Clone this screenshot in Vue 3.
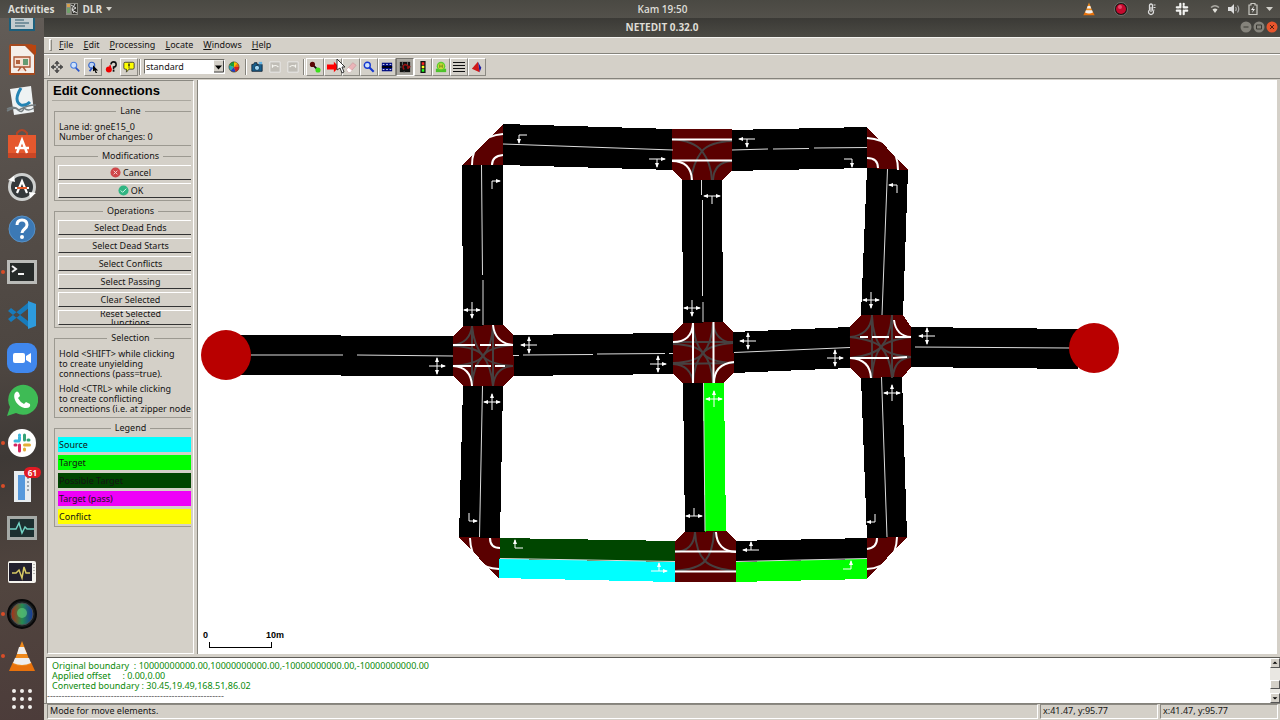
<script setup>
import { ref } from 'vue'

const scheme = ref('standard')

const menus = ['File', 'Edit', 'Processing', 'Locate', 'Windows', 'Help']

const operations = [
  'Select Dead Ends',
  'Select Dead Starts',
  'Select Conflicts',
  'Select Passing',
  'Clear Selected',
  'Reset Selected Junctions'
]

const legend = [
  { text: 'Source', cls: 'source' },
  { text: 'Target', cls: 'target' },
  { text: 'Possible Target', cls: 'possible' },
  { text: 'Target (pass)', cls: 'pass' },
  { text: 'Conflict', cls: 'conflict' }
]

const log = [
  'Original boundary  : 10000000000.00,10000000000.00,-10000000000.00,-10000000000.00',
  'Applied offset     : 0.00,0.00',
  'Converted boundary : 30.45,19.49,168.51,86.02',
  '-------------------------------------------------------------'
]

const BLACK = '#000'
const lanes = [
  { p: '503,124 673,129 673,170 503,165', c: BLACK },
  { p: '731,130 867,127 867,168 731,171', c: BLACK },
  { p: '462,165 503,165 503,325 463,326', c: BLACK },
  { p: '682,180 722,180 723,323 683,323', c: BLACK },
  { p: '867,168 908,170 903,316 861,315', c: BLACK },
  { p: '226,335 453,336 453,376 226,375', c: BLACK },
  { p: '513,335 673,333 673,374 513,376', c: BLACK },
  { p: '733,332 850,327 850,368 733,373', c: BLACK },
  { p: '911,327 1078,329 1078,369 911,367', c: BLACK },
  { p: '463,386 503,386 500,538 459,537', c: BLACK },
  { p: '683,383 703,383 705,532 685,532', c: BLACK },
  { p: '703,383 724,383 726,532 705,532', c: '#0f0' },
  { p: '861,378 902,376 907,537 867,538', c: BLACK },
  { p: '500,538 675,541 675,562 499,559', c: '#004600' },
  { p: '499,559 675,562 675,582 499,578', c: '#0ff' },
  { p: '736,541 867,538 867,559 736,562', c: BLACK },
  { p: '736,562 867,559 867,579 736,582', c: '#0f0' }
]

const dividers = [
  'M503 144L673 150', 'M732 150L768 149M773 149L809 148.500M814 148L867 147.500',
  'M481.500 165L482.500 275M483 280V325', 'M701.500 180V195M702.500 200V296M703 302V322',
  'M887.500 169L882 315', 'M251 355H343M357 355L453 356',
  'M513 355.500H519M523 355L593 354.500M597 354L665 353.500M669 353.500H673',
  'M734 352.500L850 347.500', 'M915 347L1070 348',
  'M482.500 386L479.500 537', 'M703.500 383L705 531', 'M881.500 377L887 537',
  'M500 558.500L675 561.500', 'M736 561.500L867 558.500'
]

const junctions = [
  '503,124 503,165 462,165',
  '672,129 732,129 732,170 722,180 682,180 672,170',
  '867,127 908,170 867,168',
  '463,326 503,325 513,335 514,375 503,386 463,386 453,376 453,336',
  '683,323 723,322 733,332 734,372 724,383 683,383 673,374 673,333',
  '861,315 903,315 911,327 911,367 903,377 861,378 850,368 850,327',
  '459,537 500,538 499,579',
  '685,532 726,531 736,541 736,582 675,582 675,541',
  '867,538 907,537 867,579'
]

const grayCurves = [
  'M672 139Q694 141 702 151Q711 163 712 180', 'M732 141Q710 142 702 151Q693 163 691 180', 'M732 161Q714 162 713 180',
  'M472 326V386', 'M493 326V386', 'M453 345Q470 343 472 326', 'M453 346Q477 347 483 356Q491 366 493 386', 'M513 366Q489 364 483 356Q474 346 472 326',
  'M513 366Q495 367 493 386', 'M453 366Q477 364 483 356Q492 346 493 326', 'M513 345Q489 347 483 356Q473 366 472 386',
  'M673 342L733 342', 'M673 364L734 363', 'M713 323Q715 341 733 343', 'M673 364Q691 365 693 383',
  'M673 344Q697 345 703 353Q712 363 713 383', 'M733 363Q709 362 703 353Q694 343 693 323', 'M673 363Q697 362 703 353Q712 343 713 323', 'M733 343Q709 345 703 353Q694 363 693 383',
  'M872 315V378', 'M892 315V378', 'M850 337Q870 335 872 316', 'M850 337Q874 340 881 347Q890 357 892 377', 'M911 357Q888 355 881 347Q873 337 872 316',
  'M911 357Q894 359 893 377', 'M850 358Q874 355 881 347Q890 337 892 316', 'M911 337Q888 340 881 347Q873 357 872 377',
  'M695 532Q694 551 675 552', 'M695 532Q696 552 705 561Q713 569 736 571', 'M714 532Q713 552 705 561Q698 569 675 571'
]

const whiteCurves = [
  'M672 139.500H732', 'M672 160.500H732', 'M672 161Q691 161 692 180',
  'M503 134Q472 137 472 165', 'M503 155Q492 156 492 165',
  'M867 138Q898 140 898 170', 'M867 158Q878 158 878 168',
  'M453 345H475M480 345H491M495 345H513', 'M453 366H471M475 366H491M495 366H505', 'M493 325Q495 343 513 345', 'M453 366Q471 367 472 386',
  'M693 323V383', 'M713.500 322V383', 'M673 342Q692 342 693 323', 'M734 362Q714 364 714 383',
  'M860 337H868M872 337H889M895 337H911', 'M850 358H889M893 358L907 357', 'M894 320Q896 336 911 337', 'M850 358Q870 359 871 378',
  'M470 538Q471 568 499 569', 'M490 538Q490 548 500 548',
  'M675 551.500H736', 'M675 571.500H736', 'M716 532Q717 551 736 552',
  'M897 537Q896 567 867 569', 'M877 538Q877 548 867 549'
]

// Each arrow: x, y, tail direction, head directions
const arrows = [
  [519, 135, 'R', 'D'], [657, 159, 'L', 'RD'], [492, 181, 'D', 'R'], [472, 310, 'U', 'LRD'],
  [692, 308, 'U', 'LRD'], [712, 196, 'D', 'LR'], [747, 139, 'R', 'LD'], [852, 159, 'L', 'D'],
  [897, 185, 'D', 'L'], [871, 300, 'U', 'LRD'], [748, 341, 'R', 'LUD'], [835, 358, 'L', 'RUD'],
  [927, 336, 'R', 'LUD'], [892, 393, 'D', 'LRU'], [529, 345, 'R', 'LUD'], [658, 364, 'L', 'RUD'],
  [437, 366, 'L', 'RUD'], [492, 402, 'D', 'LRU'], [714, 399, 'D', 'LRU'], [694, 516, 'U', 'LR'],
  [469, 521, 'U', 'R'], [515, 548, 'R', 'U'], [659, 571, 'L', 'RU'], [875, 522, 'U', 'L'],
  [751, 550, 'R', 'LU'], [851, 569, 'L', 'U']
]
const DIR = { L: [-1, 0], R: [1, 0], U: [0, -1], D: [0, 1] }
const stems = arrows.map(([x, y, tail, heads]) =>
  [...(tail + heads)].map(d => `M${x} ${y}l${DIR[d][0] * 8} ${DIR[d][1] * 8}`).join('')
).join('')
const tips = arrows.map(([x, y, , heads]) =>
  [...heads].map(d => {
    const [a, b] = DIR[d]
    return `M${x + a * 9} ${y + b * 9}L${x + a * 4 - b * 2} ${y + b * 4 - a * 2}L${x + a * 4 + b * 2} ${y + b * 4 + a * 2}Z`
  }).join('')
).join('')
</script>

<template>
  <div class="desktop">
    <header class="topbar">
      <button class="act">Activities</button>
      <button class="appmenu">
        <svg width="12" height="12" viewBox="0 0 12 12"><rect width="12" height="12" fill="#8c8b84" /><path d="M1 1h3v3H1z" fill="#d8a04a" /><path d="M1 5h3v5H1z" fill="#6fa06a" /><path d="M5 1h6v10H6z" fill="#35342f" /><path d="M5 2l5 3-4 2 5 3M9 1l-3 5 2 4" stroke="#ddd" fill="none" /></svg>
        DLR
        <svg width="6" height="4" viewBox="0 0 6 4"><path d="M0 0h6L3 4z" fill="#d0cfc9" /></svg>
      </button>
      <time class="clock">Kam 19:50</time>
      <div class="tray">
        <svg width="14" height="14" viewBox="0 0 32 32"><path d="M3 30L7 22h18l4 8z" fill="#e8720c" /><path d="M16 1l9 23q-9 4-18 0z" fill="#f08a1c" /><path d="M13 9h6l2 6H11zM9 19h14l2 5q-9 4-18 0z" fill="#eee" /></svg>
        <svg width="16" height="16" viewBox="0 0 16 16"><circle cx="8" cy="8" r="6.500" fill="#17130f" stroke="#888" stroke-width=".7" /><circle cx="8" cy="8" r="5" fill="#c40a2e" /><circle cx="7" cy="6" r="2" fill="#e5486a" /></svg>
        <svg width="12" height="14" viewBox="0 0 12 14"><path d="M3.500 3.500q0-1.500 1.500-1.500t1.500 1.500v4.500a2.500 2.500 0 1 1-3 0z" fill="none" stroke="#ddd" stroke-width="1.300" /><path d="M5 5v5M7.500 3h2M7.500 5.500h2M7.500 8h1" stroke="#ddd" stroke-width="1.200" /></svg>
        <svg width="14" height="14" viewBox="0 0 14 14"><path d="M5.300 1.800v3.700M8.700 1.800v.4M8.700 4v1.500M12.200 5.300H8.700M1.800 5.300h2M1.800 8.700h3.500M5.300 12.200V9.500M8.700 8.700v3.500M12.200 8.700h-2" stroke="#f4f4f2" stroke-width="2.200" stroke-linecap="round" /></svg>
        <span class="system">
          <svg width="10" height="10" viewBox="0 0 10 10"><path d="M1 3.500q4-3.500 8 0" fill="none" stroke="#aaa9a3" stroke-width="1.500" /><path d="M2.500 5.500q2.500-2 5 0L5 9z" fill="#e2e1db" /></svg>
          <svg width="12" height="10" viewBox="0 0 12 10"><path d="M0 3h3l3-3v10L3 7H0z" fill="#ddd" /><path d="M7.500 3q1.500 2 0 4M9.500 1.500q2.500 3.500 0 7" fill="none" stroke="#aaa" stroke-width="1.200" /></svg>
          <svg width="10" height="12" viewBox="0 0 10 12"><path d="M3 .5h4v1.500h2v9.500H1V2h2z" fill="none" stroke="#c9c8c2" stroke-width="1.200" /><path d="M6 3L3 7h2l-1 3 3-4H5z" fill="#eee" /></svg>
          <svg width="7" height="4" viewBox="0 0 7 4"><path d="M0 0h7L3.500 4z" fill="#d0cfc9" /></svg>
        </span>
      </div>
    </header>

    <div class="workspace">
      <nav class="dock">
        <ul>
          <li><button aria-label="Writer"><svg viewBox="0 0 32 32"><path d="M3 0h26v31H3z" fill="#1c607d" /><path d="M5 0h22v29H5z" fill="#c3cdd0" /><path d="M9 20h9M9 23h14M9 26h10" stroke="#5f7f8c" stroke-width="1.500" /></svg></button></li>
          <li><button aria-label="Impress"><svg viewBox="0 0 32 32"><path d="M4 1h22l3 3v28H3V3z" fill="#a4491f" /><path d="M5 3h14l9 9v18H5V3z" fill="#f4eeea" /><path d="M20 2l10 10V2z" fill="#b9440f" /><path d="M8 14h16v10H8zM12 28l3-4h2l3 4" fill="#f6dfd2" stroke="#aa5534" stroke-width="1.300" /><path d="M10 17h4v4h-4z" fill="#b2613d" /><path d="M17 16h5v6h-5z" fill="#649b73" /></svg></button></li>
          <li><button aria-label="Notes"><svg viewBox="0 0 32 32"><path d="M4 4L25 1l3 26L8 30z" fill="#eef2f3" /><path d="M15 3q-8 13 0 17 5 1 9-3" fill="none" stroke="#2484b4" stroke-width="3" /><path d="M1 24q7-4 12 1 8-5 17-5M1 26q8-5 11-1 4 4 6-2 4 4 10 0" fill="none" stroke="#747d80" stroke-width="1.500" /></svg></button></li>
          <li><button aria-label="Software"><svg viewBox="0 0 32 32"><path d="M11 9V5q5-6 10 0v4" fill="none" stroke="#b04527" stroke-width="2" /><path d="M2 7h28v23H2z" fill="#e5582e" /><path d="M2 25h28v5H2z" fill="#c94625" /><path d="M11 25l5-13 5 13M9 20h14" fill="none" stroke="#fff" stroke-width="2.500" /></svg></button></li>
          <li><button aria-label="Updater"><svg viewBox="0 0 32 32"><circle cx="16" cy="16" r="12.500" fill="#35393b" stroke="#ced0cf" stroke-width="3" /><path d="M2 9l6-4 1 6zM30 22l-6 5-1-6z" fill="#fff" /><path d="M11 22l5-12 5 12M9 17h14" fill="none" stroke="#fff" stroke-width="2.200" /><path d="M11 17h10" stroke="#e65928" stroke-width="2" /></svg></button></li>
          <li><button aria-label="Help"><svg viewBox="0 0 32 32"><circle cx="16" cy="16" r="13" fill="#3c79b5" stroke="#5791c7" /><path d="M11 12q0-5 5-5t5 5c0 4-5 4-5 8" fill="none" stroke="#fff" stroke-width="3" /><circle cx="16" cy="24" r="2" fill="#fff" /></svg></button></li>
          <li class="running"><button aria-label="Terminal"><svg viewBox="0 0 32 32"><path d="M1 4h30v24H1z" fill="#babbb8" /><path d="M4 7h24v18H4z" fill="#262a29" /><path d="M6 10l4 3-4 3M12 18h6" fill="none" stroke="#f3f3f3" stroke-width="2" /></svg></button></li>
          <li><button aria-label="Code"><svg viewBox="0 0 32 32"><path d="M2 12l3-3 17 13v6L2 12M2 20l3 3L23 9V3L2 20" fill="#187bbb" /><path d="M22 2l8 3v22l-8 3z" fill="#2d9bdd" /></svg></button></li>
          <li><button aria-label="Meetings"><svg viewBox="0 0 32 32"><rect x="1" y="1" width="30" height="30" rx="9" fill="#4087ed" /><rect x="7" y="11" width="12" height="10" rx="2" fill="#fff" /><path d="M20 14l5-3v10l-5-3z" fill="#fff" /></svg></button></li>
          <li><button aria-label="Chat"><svg viewBox="0 0 32 32"><path d="M1 32l3-9a15 15 0 1 1 6 6z" fill="#3ebb55" /><path d="M9 9q2-3 4 0l1 3-2 2q2 4 6 6l2-2 4 2q1 4-4 4C12 24 6 14 9 9z" fill="#fff" /></svg></button></li>
          <li class="running"><button aria-label="Team"><svg viewBox="0 0 32 32"><circle cx="16" cy="16" r="14" fill="#fff" /><g stroke-width="3" stroke-linecap="round"><path d="M9 14h4M13.500 8v1M13.500 10v3" stroke="#3cb6dd" /><path d="M18.500 8v5M22 13h1" stroke="#34a276" /><path d="M18.500 18h5M18.500 22v1" stroke="#e5ad36" /><path d="M13.500 18v6M9 18h1" stroke="#d5265f" /></g></svg></button></li>
          <li class="running"><button aria-label="Files"><svg viewBox="0 0 32 32"><path d="M8 1h17v31H8z" fill="#e8edf0" /><path d="M12 5h7v25h-7z" fill="#5699dc" /><path d="M21 4h2M21 8h2M21 12h2M21 16h2M21 20h2" stroke="#52616b" /></svg></button><span class="badge">61</span></li>
          <li><button aria-label="Monitor"><svg viewBox="0 0 32 32"><path d="M1 4h30v24H1z" fill="#a5a9a6" /><path d="M4 7h24v18H4z" fill="#1c2f30" /><path d="M4 17h6l3-6 3 10 3-6 2 2h7" fill="none" stroke="#72d4c5" stroke-width="1.500" /></svg></button></li>
          <li><button aria-label="Power"><svg viewBox="0 0 32 32"><rect x="2" y="6" width="28" height="22" rx="2" fill="#f4f3ee" /><path d="M3 8h23v18H3z" fill="#22202e" /><path d="M6 18h4l3-3 3 8 2-11 2 6h4" fill="none" stroke="#d8c965" stroke-width="1.500" /><path d="M28 9v12" stroke="#777" stroke-dasharray="1 2" /></svg></button></li>
          <li class="running"><button aria-label="Camera"><svg viewBox="0 0 32 32"><defs><linearGradient id="lens"><stop offset="0" stop-color="#b22b16" /><stop offset=".5" stop-color="#268b50" /><stop offset="1" stop-color="#18349c" /></linearGradient></defs><circle cx="16" cy="16" r="14" fill="#191c1d" stroke="#090909" stroke-width="2" /><circle cx="16" cy="16" r="11" fill="url(#lens)" stroke="#494f50" /><circle cx="16" cy="15" r="5" fill="#5bc878" opacity=".7" /></svg></button></li>
          <li class="running"><button aria-label="Media"><svg viewBox="0 0 32 32"><path d="M3 31l4-9h18l4 9z" fill="#e8720c" /><path d="M16 1l9 23q-9 4-18 0z" fill="#f08a1c" /><path d="M13 7h5l3 7H11zM9 18h14l2 5q-9 4-18 0z" fill="#eee" /></svg></button></li>
          <li><button aria-label="Applications"><svg viewBox="0 0 32 32" fill="#f2f0ed"><g v-for="r in 3" :key="r"><circle v-for="c in 3" :key="c" :cx="8 * c" :cy="8 * r" r="2" /></g></svg></button></li>
        </ul>
      </nav>

      <main class="window">
        <div class="titlebar">
          <h1>NETEDIT 0.32.0</h1>
          <div class="controls">
            <button aria-label="Minimize"><svg viewBox="0 0 12 12"><circle cx="6" cy="6" r="5.500" fill="#85837b" /><path d="M3.500 6h5" stroke="#3b3a35" /></svg></button>
            <button aria-label="Maximize"><svg viewBox="0 0 12 12"><circle cx="6" cy="6" r="5.500" fill="#85837b" /><path d="M3.500 4h5v4h-5z" fill="none" stroke="#3b3a35" /></svg></button>
            <button aria-label="Close"><svg viewBox="0 0 12 12"><circle cx="6" cy="6" r="5.500" fill="#e8552c" /><path d="M4 4l4 4M8 4l-4 4" stroke="#57200f" /></svg></button>
          </div>
        </div>

        <nav class="menubar">
          <i class="grip"></i>
          <button v-for="m in menus" :key="m"><u>{{ m[0] }}</u>{{ m.slice(1) }}</button>
        </nav>

        <div class="toolbar">
          <i class="grip"></i>
          <button class="tool" aria-label="Move view"><svg viewBox="0 0 14 14"><path d="M7 0l2.500 3h-5zM7 14l2.500-3h-5zM0 7l3-2.500v5zM14 7l-3-2.500v5z" fill="#555" stroke="#222" stroke-width=".6" /><path d="M7 3v8M3 7h8" stroke="#333" stroke-width="1.500" /><circle cx="7" cy="7" r="1.500" fill="#ccc" /></svg></button>
          <button class="tool" aria-label="Zoom"><svg viewBox="0 0 14 14"><circle cx="5.500" cy="5" r="3.500" fill="#cfe2fb" stroke="#4a7fe0" stroke-width="1.300" /><path d="M8 8l4 4" stroke="#2b55c8" stroke-width="2" /></svg></button>
          <button class="tool raised" aria-label="Zoom style"><svg viewBox="0 0 14 14"><circle cx="5.500" cy="5" r="3.500" fill="#bcd3f5" stroke="#3565c8" stroke-width="1.300" /><path d="M3 12l3-4" stroke="#2b55c8" stroke-width="2" /><path d="M7 5l6 6H10l2 3-2 0-1-3-2 1z" fill="#000" /></svg></button>
          <button class="tool" aria-label="What is this"><svg viewBox="0 0 14 14"><circle cx="4.500" cy="10" r="3.500" fill="#e00" /><path d="M5 7V5h2v3" fill="#e00" /><path d="M7 4q0-3 3-3t3 3-3 3v3" fill="none" stroke="#111" stroke-width="1.800" /><path d="M9 11.500h2" stroke="#111" stroke-width="2" /></svg></button>
          <button class="tool raised" aria-label="Tooltips"><svg viewBox="0 0 14 14"><path d="M2.500 1.500h9q1.500 0 1.500 1.500v5q0 1.500-1.500 1.500H7L4 13V9.500H2.500Q1 9.500 1 8V3q0-1.500 1.500-1.500z" fill="#ff0" stroke="#333" /><path d="M7 3v3.500M7 7.500v1" stroke="#111" stroke-width="1.500" /></svg></button>
          <i class="sep"></i>
          <span class="combo">
            <select v-model="scheme" aria-label="Coloring scheme"><option>standard</option></select>
            <svg viewBox="0 0 10 12"><path d="M0 0h10v12H0z" fill="#d4d0c8" /><path d="M9.500 0v11.500H0" stroke="#444" fill="none" /><path d="M1 5h7L4.500 9z" fill="#000" /></svg>
          </span>
          <button class="tool" aria-label="Edit colors"><svg viewBox="0 0 14 14"><circle cx="7" cy="7" r="6" fill="#f3c300" /><path d="M7 7V1A6 6 0 0 0 1.500 5z" fill="#1b9d3c" /><path d="M7 7L1.500 5A6 6 0 0 0 3 11.500z" fill="#21a9b8" /><path d="M7 7l-4 4.500A6 6 0 0 0 9 12.500z" fill="#2341c8" /><path d="M7 7l2 5.500A6 6 0 0 0 13 7z" fill="#d41c24" /><path d="M7 7h6a6 6 0 0 0-2-4z" fill="#f16a13" /><circle cx="7" cy="7" r="6" fill="none" stroke="#333" stroke-width=".6" /></svg></button>
          <i class="sep"></i>
          <button class="tool" aria-label="Snapshot"><svg viewBox="0 0 14 14"><path d="M1 4h2l1-2h3v2h6v8H1z" fill="#17608f" stroke="#123" /><path d="M9 1h4v3H9z" fill="#68b5e4" /><circle cx="7" cy="8" r="3" fill="#9fd7f5" stroke="#0b2f4a" /></svg></button>
          <button class="tool" aria-label="Undo" disabled><svg viewBox="0 0 14 14"><path d="M1 1h12v12H1z" fill="#c0bdb6" stroke="#eee" /><path d="M4 8V5l1 1q3-2 6 1" fill="none" stroke="#f5f5f0" stroke-width="1.300" /></svg></button>
          <button class="tool" aria-label="Redo" disabled><svg viewBox="0 0 14 14"><path d="M1 1h12v12H1z" fill="#c0bdb6" stroke="#eee" /><path d="M10 8V5L9 6Q6 4 3 7" fill="none" stroke="#f5f5f0" stroke-width="1.300" /></svg></button>
          <i class="sep"></i>
          <button class="tool raised" aria-label="Create edge"><svg viewBox="0 0 14 14"><path d="M3 3l7 7" stroke="#111" stroke-width="2" /><circle cx="4" cy="4" r="3" fill="#5a0505" /><circle cx="10.500" cy="10.500" r="3" fill="#3be01b" /></svg></button>
          <button class="tool raised" aria-label="Move"><svg viewBox="0 0 14 14"><path d="M0 4h8V1l6 6-6 6v-3H0z" fill="#f00" /></svg></button>
          <button class="tool raised" aria-label="Delete"><svg viewBox="0 0 14 14"><path d="M2 10l7-8 4 3-7 8H4z" fill="#eab4b8" stroke="#cfa0a4" /><path d="M2 10l2-2 4 3-2 2H4z" fill="#fff" /></svg></button>
          <button class="tool raised" aria-label="Inspect"><svg viewBox="0 0 14 14"><circle cx="5" cy="5" r="3.500" fill="#cfe2fb" stroke="#1537d0" stroke-width="1.600" /><path d="M7.500 7.500l5 5" stroke="#1537d0" stroke-width="2.500" /></svg></button>
          <button class="tool raised" aria-label="Select"><svg viewBox="0 0 14 14"><path d="M1 2h12v10H1z" fill="#000c80" /><path d="M2 4h10M2 10h10" stroke="#fff" stroke-dasharray="2 2" /><path d="M1 7h12" stroke="#000" stroke-width="2" /></svg></button>
          <button class="tool pressed" aria-label="Connect"><svg viewBox="0 0 14 14"><path d="M1 1h12v12H1z" fill="#111" /><path d="M4 1v4M10 1v4M1 7h2M11 7h2M6 12v2" stroke="#777" /><path d="M6 10q-3-4 1-6 5 1 3 5l3-3" fill="none" stroke="#9b1111" stroke-width="1.800" /></svg></button>
          <button class="tool raised" aria-label="Traffic lights"><svg viewBox="0 0 14 14"><path d="M4 0h6v14H4z" fill="#111" /><path d="M5.500 1.500h3v3h-3z" fill="#f22" /><path d="M5.500 5.500h3v3h-3z" fill="#ff2" /><path d="M5.500 9.500h3v3h-3z" fill="#2f2" /></svg></button>
          <button class="tool raised" aria-label="Additional"><svg viewBox="0 0 14 14"><path d="M1 9h12v4H1z" fill="#4dc22c" /><circle cx="7" cy="6" r="5" fill="#5bd02f" /><circle cx="7" cy="6" r="3.500" fill="#cfd83a" /><path d="M5.500 4v4M8.500 4v4M5.500 6h3" stroke="#6a8a17" /></svg></button>
          <button class="tool raised" aria-label="Crossings"><svg viewBox="0 0 12 12"><path d="M0 1.500h12M0 4.500h12M0 7.500h12M0 10.500h12" stroke="#111" /></svg></button>
          <button class="tool raised" aria-label="Polygons"><svg viewBox="0 0 14 14"><path d="M8 1l4 7-2 5z" fill="#1c1ca0" /><path d="M8 1L1 9l9 4z" fill="#d01818" /></svg></button>
        </div>

        <div class="content">
          <aside class="panel">
            <div class="frame">
              <h2>Edit Connections</h2>
              <fieldset>
                <legend>Lane</legend>
                <p>Lane id: gneE15_0<br>Number of changes: 0</p>
              </fieldset>
              <fieldset class="stack">
                <legend>Modifications</legend>
                <button><svg viewBox="0 0 12 12"><circle cx="6" cy="6" r="5.500" fill="#cf4548" /><path d="M4 4l4 4M8 4l-4 4" stroke="#f6dcdc" /></svg>Cancel</button>
                <button><svg viewBox="0 0 12 12"><circle cx="6" cy="6" r="5.500" fill="#30b582" /><path d="M3 6l2 2 4-4" fill="none" stroke="#e2fff4" /></svg>OK</button>
              </fieldset>
              <fieldset class="stack">
                <legend>Operations</legend>
                <button v-for="o in operations" :key="o"><span>{{ o }}</span></button>
              </fieldset>
              <fieldset>
                <legend>Selection</legend>
                <p>Hold &lt;SHIFT&gt; while clicking<br>to create unyielding<br>connections (pass=true).</p>
                <p>Hold &lt;CTRL&gt; while clicking<br>to create conflicting<br>connections (i.e. at zipper nodes).</p>
              </fieldset>
              <fieldset class="stack">
                <legend>Legend</legend>
                <div v-for="l in legend" :key="l.text" class="swatch" :class="l.cls">{{ l.text }}</div>
              </fieldset>
            </div>
          </aside>

          <section class="canvas">
            <svg class="map" width="100%" height="100%">
              <g transform="translate(-198 -80)">
                <g shape-rendering="crispEdges">
                  <polygon v-for="l in lanes" :key="l.p" :points="l.p" :fill="l.c" />
                  <polygon v-for="j in junctions" :key="j" :points="j" fill="#5a0000" />
                </g>
                <path v-for="d in dividers" :key="d" :d="d" class="divider" />
                <path v-for="d in grayCurves" :key="d" :d="d" class="gray" />
                <path v-for="d in whiteCurves" :key="d" :d="d" class="white" />
                <path :d="stems" class="stem" />
                <path :d="tips" fill="#fff" />
                <circle cx="226" cy="355" r="25" fill="#b90000" />
                <circle cx="1094" cy="348" r="25" fill="#b90000" />
                <path d="M209 642V647H271V642" fill="none" stroke="#000" shape-rendering="crispEdges" />
                <text x="203" y="638">0</text>
                <text x="266" y="638">10m</text>
              </g>
            </svg>
          </section>
        </div>

        <div class="logbox">
          <pre><span v-for="l in log" :key="l">{{ l }}</span></pre>
          <div class="scroll">
            <svg viewBox="0 0 10 10"><path d="M2 6h6L5 3z" /></svg>
            <i></i>
            <svg viewBox="0 0 10 10"><path d="M2 4h6L5 7z" /></svg>
          </div>
        </div>

        <footer class="status">
          <span class="msg">Mode for move elements.</span>
          <span class="coord">x:41.47, y:95.77</span>
          <span class="coord">x:41.47, y:95.77</span>
        </footer>
      </main>
    </div>

    <svg class="cursor" width="10" height="16" viewBox="0 0 10 16"><path d="M1 1v11l3-2 2 5 2-1-2-5h3z" fill="#fff" stroke="#333" /></svg>
  </div>
</template>

<style>
html, body { margin: 0; background: #45403c; }
</style>

<style scoped>
.desktop {
  position: relative;
  display: flex;
  flex-direction: column;
  height: 100vh;
  overflow: hidden;
  font: 9px/10px "Noto Sans", "DejaVu Sans", sans-serif;
  color: #141414;
}
.desktop * { box-sizing: border-box; }
button { font: inherit; color: inherit; background: none; border: 0; padding: 0; margin: 0; }
svg { display: block; flex: none; }

.topbar {
  display: grid;
  grid-template-columns: auto auto 1fr auto;
  align-items: center;
  height: 18px;
  flex: none;
  padding: 0 7px 0 8px;
  position: relative;
  background: linear-gradient(#4a4943, #53514b);
  color: #deddd7;
  font: bold 10px/18px "Open Sans", "Noto Sans", sans-serif;
}
.appmenu { display: flex; align-items: center; gap: 4px; margin-left: 12px; }
.clock { position: absolute; left: 0; right: 0; margin: auto; width: fit-content; padding-left: 45px; font-weight: 600; }
.tray { grid-column: 4; display: flex; align-items: center; gap: 17px; }
.system { display: flex; align-items: center; gap: 8px; margin-left: 4px; }

.workspace { display: flex; flex: 1; min-height: 0; }
.dock {
  width: 44px;
  flex: none;
  overflow: hidden;
  background: linear-gradient(170deg, #625c57 0%, #554e49 25%, #4c4540 50%, #3e3936 62%, #51453f 80%, #4c3c3a 100%);
}
.dock ul {
  list-style: none;
  margin: -18px 0 0;
  padding: 0 0 5px;
  height: calc(100% + 18px);
  display: flex;
  flex-direction: column;
  justify-content: space-between;
}
.dock li { position: relative; height: 32px; display: flex; justify-content: center; }
.dock svg { width: 32px; height: 32px; }
.dock .running::before {
  content: "";
  position: absolute;
  left: 1px;
  top: 14px;
  width: 4px;
  height: 4px;
  border-radius: 2px;
  background: #d84c28;
}
.badge {
  position: absolute;
  right: 3px;
  top: -3px;
  padding: 0 4px;
  border-radius: 6px;
  background: #e01b24;
  color: #fff;
  font: bold 8px/11px "Open Sans", sans-serif;
}

.window { flex: 1; min-width: 0; display: flex; flex-direction: column; background: #d4d0c8; }
.titlebar {
  position: relative;
  height: 19px;
  flex: none;
  display: flex;
  align-items: center;
  justify-content: center;
  background: linear-gradient(#3b3a36, #4b4a44);
}
.titlebar h1 { margin: 0; font: bold 10px/19px "Open Sans", sans-serif; color: #dfddd6; }
.controls { position: absolute; right: 2px; top: 3px; display: flex; gap: 1px; }
.controls svg { width: 12px; height: 12px; }

.menubar {
  display: flex;
  align-items: center;
  gap: 10px;
  height: 17px;
  flex: none;
  padding: 0 0 2px 5px;
  border-top: 1px solid #f4f3ef;
  border-bottom: 1px solid #85837c;
}
.grip { width: 3px; height: 12px; border: 1px solid; border-color: #fff #8b8982 #8b8982 #fff; }
.menubar .grip { margin-right: -3px; }
u { text-underline-offset: 1px; }

.toolbar {
  display: flex;
  align-items: center;
  height: 25px;
  flex: none;
  padding-left: 4px;
  border-top: 1px solid #fff;
  border-bottom: 1px solid #85837c;
}
.toolbar .grip { width: 2px; height: 18px; margin-right: -2px; }
.tool { width: 18px; height: 18px; display: grid; place-items: center; border: 1px solid transparent; flex: none; }
.tool svg { width: 12px; height: 12px; }
.tool.raised { border-color: #fff #8b8982 #8b8982 #fff; }
.tool.pressed { border-color: #77756f #fff #fff #77756f; background: #aaa7a0; }
.sep { width: 2px; height: 16px; border-left: 1px solid #85837c; border-right: 1px solid #fff; margin: 0 1px; }
.combo {
  display: flex;
  align-items: center;
  width: 81px;
  height: 15px;
  margin-left: 2px;
  border: 1px solid;
  border-color: #716f69 #fff #fff #716f69;
  background: #fff;
}
.combo select { flex: 1; min-width: 0; height: 13px; appearance: none; border: 0; background: #fff; color: #141414; font: inherit; padding: 0 1px; }
.combo svg { width: 10px; height: 13px; }
.combo + .tool { margin-right: 1px; }

.content { display: flex; flex: 1; min-height: 0; padding: 1px 3px 0; }
.panel {
  width: 147px;
  flex: none;
  border: 1px solid;
  border-color: #8b8982 #fff #fff #8b8982;
  padding: 0 2px 0 4px;
}
.frame { height: 100%; overflow: hidden; }
h2 {
  margin: 0 0 5px;
  padding-left: 1px;
  height: 20px;
  border-bottom: 1px solid #aaa79f;
  font: bold 13px/20px "Liberation Sans", Arial, sans-serif;
  color: #000;
  white-space: nowrap;
}
fieldset {
  margin: 0 -16px 5px 2px;
  padding: 6px 4px 3px;
  min-width: 0;
  border: 1px solid #9c9991;
}
legend { margin: 0 auto; padding: 0 4px; height: 10px; line-height: 10px; }
fieldset p { margin: 0; white-space: nowrap; line-height: 10px; }
fieldset p + p { margin-top: 5px; }
.stack { padding: 4px 3px 2px; }
.stack button {
  display: flex;
  align-items: center;
  justify-content: center;
  gap: 2px;
  width: 100%;
  height: 15px;
  border: 1px solid;
  border-color: #fff #333 #333 #fff;
  overflow: hidden;
}
.stack button span { width: 80px; line-height: 9px; text-align: center; }
.stack button svg { width: 11px; height: 11px; }
.stack button + button, .swatch + .swatch { margin-top: 3px; }
.swatch { height: 15px; line-height: 15px; padding-left: 1px; }
.source { background: #0ff; }
.target { background: #0f0; }
.possible { background: #004600; }
.pass { background: #ee00f8; }
.conflict { background: #ff0; }

.canvas { flex: 1; min-width: 0; margin-left: 3px; background: #fff; overflow: hidden; border-left: 1px solid #85837c; }
.divider { stroke: #dcdcdc; stroke-width: 1; fill: none; }
.gray { stroke: #474040; stroke-width: 2; fill: none; }
.white { stroke: #fff; stroke-width: 2; fill: none; }
.stem { stroke: #fff; stroke-width: 1; fill: none; }
.map text { font: bold 9px "Liberation Sans", Arial, sans-serif; fill: #000; }

.logbox {
  display: flex;
  height: 46px;
  flex: none;
  margin: 3px 0 0 2px;
  border-top: 1px solid #5e5c57;
  border-left: 1px solid #85837c;
  background: #fff;
}
.logbox pre { flex: 1; min-width: 0; overflow: hidden; margin: 0; padding: 3px 5px 0; font: inherit; color: #0b8a0b; }
.logbox pre span { display: block; height: 10px; }
.logbox pre span:last-child { margin-left: -5px; color: #555; }
.scroll { width: 10px; display: flex; flex-direction: column; background: #e9e7e2; }
.scroll svg { width: 10px; height: 10px; background: #d4d0c8; border: 1px solid; border-color: #fff #555 #555 #fff; }
.scroll i { flex: 1; margin: 12px 0 4px; background: #d4d0c8; border: 1px solid; border-color: #fff #555 #555 #fff; }

.status { display: flex; align-items: center; gap: 2px; height: 17px; flex: none; padding: 0 2px 1px 3px; border-top: 1px solid #85837c; }
.status span { height: 15px; line-height: 12px; padding: 0 2px; border: 1px solid; border-color: #8b8982 #fff #fff #8b8982; }
.msg { flex: 1; }
.coord { width: 118px; }

.cursor { position: absolute; left: 336px; top: 58px; }
</style>
